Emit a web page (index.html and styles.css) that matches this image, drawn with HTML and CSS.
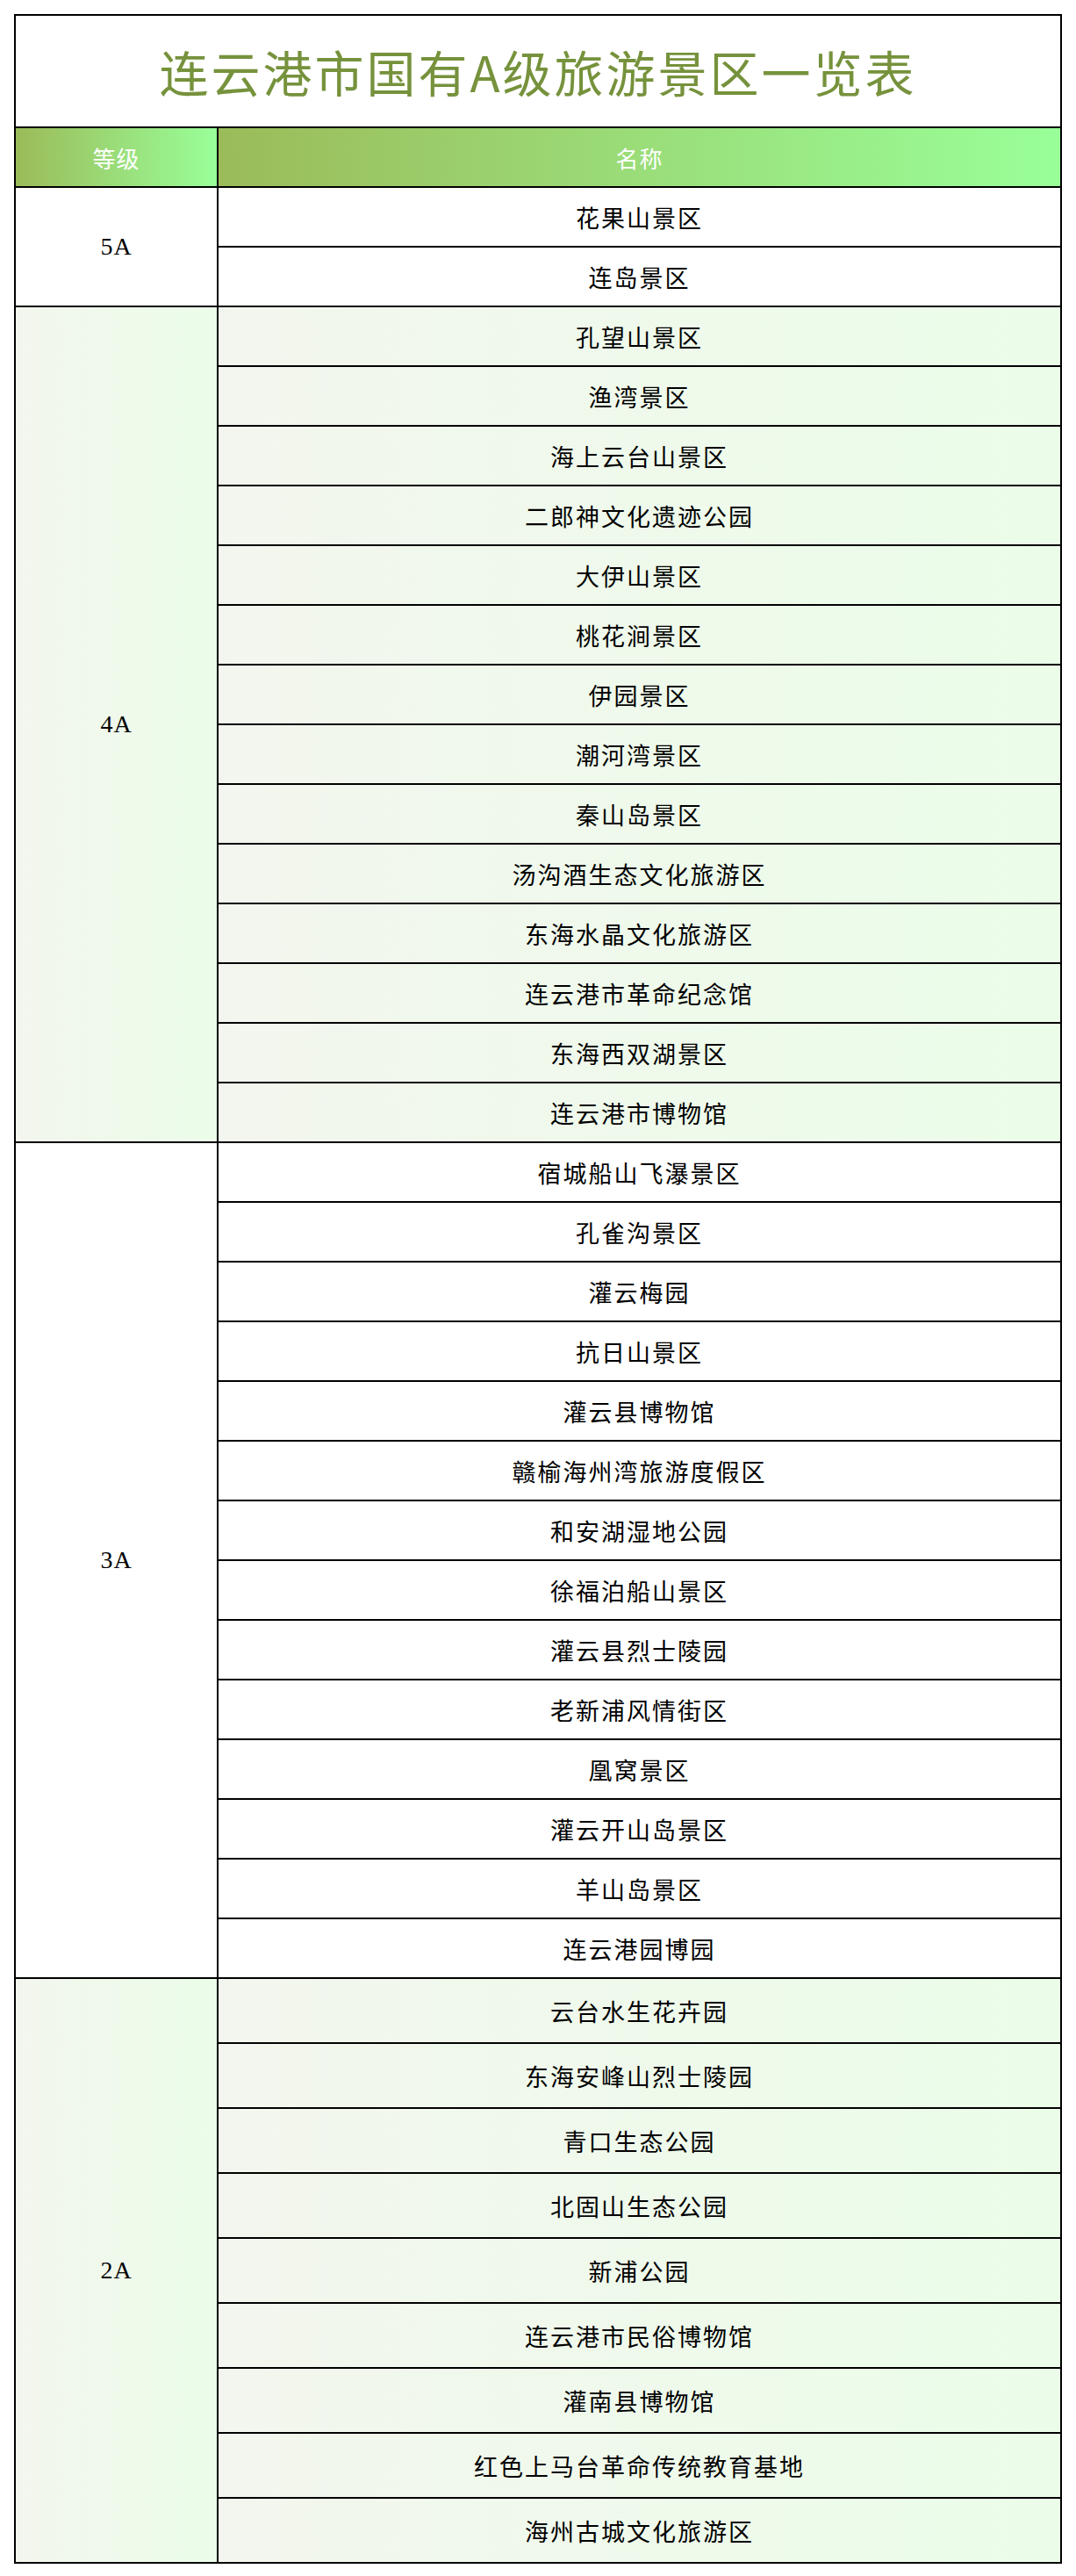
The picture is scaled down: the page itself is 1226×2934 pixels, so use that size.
FILE: index.html
```html
<!DOCTYPE html>
<html lang="zh-CN">
<head>
<meta charset="utf-8">
<title>连云港市国有A级旅游景区一览表</title>
<link rel="stylesheet" href="styles.css">
</head>
<body>
<table class="scenic">
  <colgroup><col class="col-grade"><col class="col-name"></colgroup>
  <tr class="row-title"><td colspan="2" class="title">连云港市国有A级旅游景区一览表</td></tr>
  <tr class="row-head"><th class="grade-h">等级</th><th class="name-h">名称</th></tr>

  <tr class="row"><td class="grade" rowspan="2">5A</td><td class="name">花果山景区</td></tr>
  <tr class="row"><td class="name">连岛景区</td></tr>

  <tr class="row tint"><td class="grade" rowspan="14">4A</td><td class="name">孔望山景区</td></tr>
  <tr class="row tint"><td class="name">渔湾景区</td></tr>
  <tr class="row tint"><td class="name">海上云台山景区</td></tr>
  <tr class="row tint"><td class="name">二郎神文化遗迹公园</td></tr>
  <tr class="row tint"><td class="name">大伊山景区</td></tr>
  <tr class="row tint"><td class="name">桃花涧景区</td></tr>
  <tr class="row tint"><td class="name">伊园景区</td></tr>
  <tr class="row tint"><td class="name">潮河湾景区</td></tr>
  <tr class="row tint"><td class="name">秦山岛景区</td></tr>
  <tr class="row tint"><td class="name">汤沟酒生态文化旅游区</td></tr>
  <tr class="row tint"><td class="name">东海水晶文化旅游区</td></tr>
  <tr class="row tint"><td class="name">连云港市革命纪念馆</td></tr>
  <tr class="row tint"><td class="name">东海西双湖景区</td></tr>
  <tr class="row tint"><td class="name">连云港市博物馆</td></tr>

  <tr class="row"><td class="grade" rowspan="14">3A</td><td class="name">宿城船山飞瀑景区</td></tr>
  <tr class="row"><td class="name">孔雀沟景区</td></tr>
  <tr class="row"><td class="name">灌云梅园</td></tr>
  <tr class="row"><td class="name">抗日山景区</td></tr>
  <tr class="row"><td class="name">灌云县博物馆</td></tr>
  <tr class="row"><td class="name">赣榆海州湾旅游度假区</td></tr>
  <tr class="row"><td class="name">和安湖湿地公园</td></tr>
  <tr class="row"><td class="name">徐福泊船山景区</td></tr>
  <tr class="row"><td class="name">灌云县烈士陵园</td></tr>
  <tr class="row"><td class="name">老新浦风情街区</td></tr>
  <tr class="row"><td class="name">凰窝景区</td></tr>
  <tr class="row"><td class="name">灌云开山岛景区</td></tr>
  <tr class="row"><td class="name">羊山岛景区</td></tr>
  <tr class="row"><td class="name">连云港园博园</td></tr>

  <tr class="row tall tint"><td class="grade" rowspan="9">2A</td><td class="name">云台水生花卉园</td></tr>
  <tr class="row tall tint"><td class="name">东海安峰山烈士陵园</td></tr>
  <tr class="row tall tint"><td class="name">青口生态公园</td></tr>
  <tr class="row tall tint"><td class="name">北固山生态公园</td></tr>
  <tr class="row tall tint"><td class="name">新浦公园</td></tr>
  <tr class="row tall tint"><td class="name">连云港市民俗博物馆</td></tr>
  <tr class="row tall tint"><td class="name">灌南县博物馆</td></tr>
  <tr class="row tall tint"><td class="name">红色上马台革命传统教育基地</td></tr>
  <tr class="row tall tint"><td class="name">海州古城文化旅游区</td></tr>
</table>
</body>
</html>
```

FILE: styles.css
```css
html, body {
  margin: 0;
  padding: 0;
  background: #ffffff;
}

body {
  font-family: "Noto Sans CJK SC", "Noto Sans", sans-serif;
  color: #000000;
}

.scenic {
  margin: 16px 0 0 16px;
  width: 1194px;
  border-collapse: collapse;
  table-layout: fixed;
}

.col-grade {
  width: 231px;
}

.scenic td,
.scenic th {
  border: 2px solid #000000;
  padding: 0;
  text-align: center;
  vertical-align: middle;
}

.row-title {
  height: 128px;
}

.title {
  background: #ffffff;
  color: #76923c;
  font-size: 56px;
  font-weight: 400;
  letter-spacing: 3px;
  padding-left: 3px;
  line-height: 1;
}

.row-head {
  height: 68px;
}

.row-head th {
  color: #ffffff;
  font-weight: 400;
  font-size: 26px;
  letter-spacing: 1px;
  background: linear-gradient(to right, #9bbb59, #99ff99);
}

.row {
  height: 68px;
}

.row.tall {
  height: 74px;
}

.name {
  font-size: 27px;
  letter-spacing: 2px;
  padding-left: 2px;
  line-height: 1;
  background: #ffffff;
}

.grade {
  font-family: "Liberation Serif", "Noto Sans CJK SC", serif;
  font-size: 28px;
  letter-spacing: 1px;
  background: #ffffff;
}

.tint .name,
.tint .grade {
  background: linear-gradient(to right, #f3f6ee, #ebfde9);
}
```
